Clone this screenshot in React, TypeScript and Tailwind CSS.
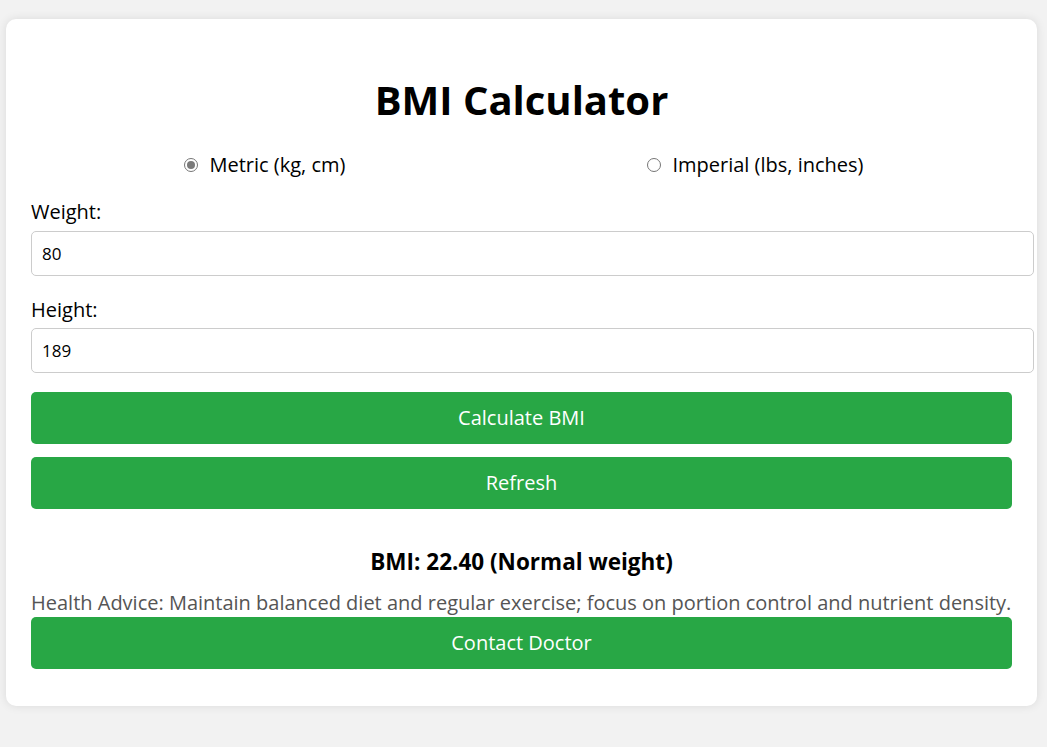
import { useState } from "react";

function Radio({ checked, label, onClick }: { checked: boolean; label: string; onClick: () => void }) {
  return (
    <label className="flex cursor-pointer items-center" onClick={onClick}>
      <span className="ml-[5px] mr-[3px] flex h-[14px] w-[14px] items-center justify-center rounded-full border border-[#767676] bg-white">
        {checked && <span className="h-[8px] w-[8px] rounded-full bg-[#7a7a7a]" />}
      </span>
      <span className="ml-[8px] text-[20px] leading-[27px] text-black">{label}</span>
    </label>
  );
}

export default function App() {
  const [unit, setUnit] = useState<"metric" | "imperial">("metric");

  return (
    <div className="min-h-[747px] bg-[#f2f2f2] pt-[19px] font-['Open_Sans',sans-serif]">
      <div className="ml-[6px] w-[1031px] rounded-[10px] bg-white px-[25px] pb-[37px] pt-[54px] shadow-[0_0_10px_rgba(0,0,0,0.1)]">
        <h1 className="text-center text-[40px] font-bold leading-[54px] text-black">BMI Calculator</h1>

        <div className="mt-[24px] flex justify-around">
          <Radio checked={unit === "metric"} label="Metric (kg, cm)" onClick={() => setUnit("metric")} />
          <Radio checked={unit === "imperial"} label="Imperial (lbs, inches)" onClick={() => setUnit("imperial")} />
        </div>

        <div className="mt-[20px] text-[20px] leading-[27px] text-black">Weight:</div>
        <input
          defaultValue="80"
          className="mt-[6px] block h-[45px] w-[1003px] rounded-[5px] border border-[#ccc] px-[10px] text-[17px] text-black outline-none"
        />

        <div className="mt-[20px] text-[20px] leading-[27px] text-black">Height:</div>
        <input
          defaultValue="189"
          className="mt-[5px] block h-[45px] w-[1003px] rounded-[5px] border border-[#ccc] px-[10px] text-[17px] text-black outline-none"
        />

        <div className="mt-[19px] flex flex-col gap-[13px]">
          <button className="h-[52px] w-full rounded-[5px] bg-[#28a745] text-[20px] text-white">Calculate BMI</button>
          <button className="h-[52px] w-full rounded-[5px] bg-[#28a745] text-[20px] text-white">Refresh</button>
        </div>

        <div className="mt-[38px] text-center text-[22.5px] font-bold leading-[30px] text-black">
          BMI: 22.40 (Normal weight)
        </div>
        <p className="mt-[12px] whitespace-nowrap text-[20px] leading-[27px] text-[#555]">
          Health Advice: Maintain balanced diet and regular exercise; focus on portion control and nutrient density.
        </p>
        <button className="mt-[1px] h-[52px] w-full rounded-[5px] bg-[#28a745] text-[20px] text-white">Contact Doctor</button>
      </div>
    </div>
  );
}
